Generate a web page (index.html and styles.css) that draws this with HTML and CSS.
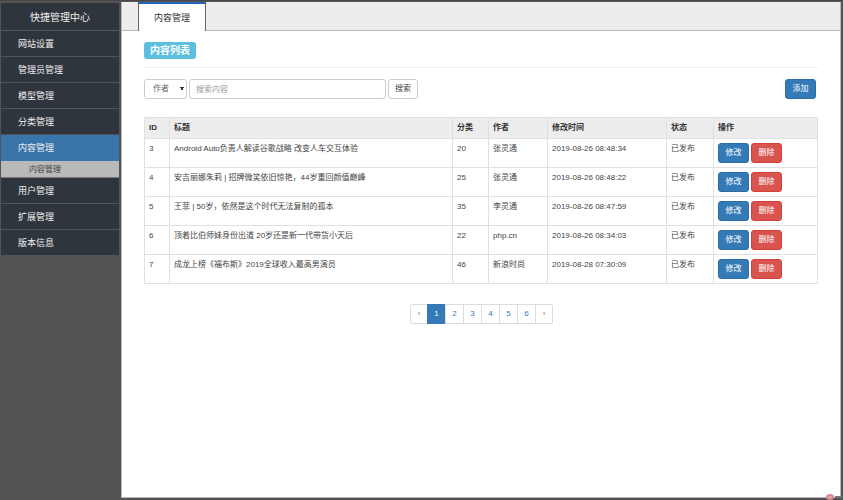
FILE: index.html
```html
<!DOCTYPE html>
<html lang="zh-CN">
<head>
<meta charset="utf-8">
<title>内容管理</title>
<link rel="stylesheet" href="styles.css">
</head>
<body>
<div class="app">
  <nav class="sidebar">
    <h1 class="brand">快捷管理中心</h1>
    <a class="item" href="#">网站设置</a>
    <a class="item" href="#">管理员管理</a>
    <a class="item" href="#">模型管理</a>
    <a class="item" href="#">分类管理</a>
    <a class="item active" href="#">内容管理</a>
    <a class="subitem" href="#">内容管理</a>
    <a class="item" href="#">用户管理</a>
    <a class="item" href="#">扩展管理</a>
    <a class="item" href="#">版本信息</a>
  </nav>
  <main class="main">
    <div class="tabs"><a class="tab" href="#">内容管理</a></div>
    <div class="content">
      <header class="heading"><h2 class="label">内容列表</h2></header>
      <form class="toolbar">
        <select class="control field" aria-label="搜索字段"><option>作者</option></select>
        <input class="control keyword" type="text" placeholder="搜索内容" aria-label="搜索内容">
        <button class="control search" type="button">搜索</button>
        <button class="btn primary add" type="button">添加</button>
      </form>
      <table class="list">
        <colgroup><col class="c-id"><col><col class="c-cat"><col class="c-author"><col class="c-time"><col class="c-state"><col class="c-ops"></colgroup>
        <thead>
          <tr><th>ID</th><th>标题</th><th>分类</th><th>作者</th><th>修改时间</th><th>状态</th><th>操作</th></tr>
        </thead>
        <tbody>
          <tr><td>3</td><td>Android Auto负责人解读谷歌战略 改变人车交互体验</td><td>20</td><td>张灵通</td><td>2019-08-26 08:48:34</td><td>已发布</td><td><div class="ops"><button class="btn primary" type="button">修改</button><button class="btn danger" type="button">删除</button></div></td></tr>
          <tr><td>4</td><td>安吉丽娜朱莉 | 招牌微笑依旧惊艳，44岁重回颜值巅峰</td><td>25</td><td>张灵通</td><td>2019-08-26 08:48:22</td><td>已发布</td><td><div class="ops"><button class="btn primary" type="button">修改</button><button class="btn danger" type="button">删除</button></div></td></tr>
          <tr><td>5</td><td>王菲 | 50岁，依然是这个时代无法复制的孤本</td><td>35</td><td>李灵通</td><td>2019-08-26 08:47:59</td><td>已发布</td><td><div class="ops"><button class="btn primary" type="button">修改</button><button class="btn danger" type="button">删除</button></div></td></tr>
          <tr><td>6</td><td>顶着比伯师妹身份出道 20岁还是新一代带货小天后</td><td>22</td><td>php.cn</td><td>2019-08-26 08:34:03</td><td>已发布</td><td><div class="ops"><button class="btn primary" type="button">修改</button><button class="btn danger" type="button">删除</button></div></td></tr>
          <tr><td>7</td><td>成龙上榜《福布斯》2019全球收入最高男演员</td><td>46</td><td>新浪时尚</td><td>2019-08-28 07:30:09</td><td>已发布</td><td><div class="ops"><button class="btn primary" type="button">修改</button><button class="btn danger" type="button">删除</button></div></td></tr>
        </tbody>
      </table>
      <nav class="pages" aria-label="分页">
        <a class="arrow" href="#">‹</a><a class="current" href="#">1</a><a href="#">2</a><a href="#">3</a><a href="#">4</a><a href="#">5</a><a href="#">6</a><a class="arrow" href="#">›</a>
      </nav>
    </div>
  </main>
  <svg class="mark" width="18" height="6" viewBox="0 0 18 6" aria-hidden="true">
    <ellipse cx="5" cy="3" rx="4" ry="3" fill="#d9898c"/>
    <path d="M3 3h4" stroke="#eec4c5"/>
    <path d="M10 3h7" stroke="#777" stroke-width="2"/>
  </svg>
</div>
</body>
</html>
```
FILE: styles.css
```css
* { box-sizing: border-box; }
body {
  margin: 0;
  background: #545454;
  color: #444;
  font: 8px/12px "Liberation Sans", "Noto Sans CJK SC", sans-serif;
}
a { text-decoration: none; }
button, input, select { font: inherit; margin: 0; }

.app {
  position: relative;
  display: flex;
  gap: 2px;
  min-height: 100vh;
  padding: 2px 2px 2px 1px;
  border-top: 1px solid #484848;
}
.sidebar {
  flex: 0 0 118px;
  display: flex;
  flex-direction: column;
}
.brand, .item {
  margin: 0;
  height: 26px;
  border-bottom: 1px solid #50555a;
  background: #2f353c;
  color: #eee;
  font-size: 9px;
  font-weight: 400;
  line-height: 27px;
}
.brand {
  height: 28px;
  font-size: 10px;
  line-height: 29px;
  text-align: center;
}
.item { padding-left: 17px; }
.item.active { background: #3974ab; border-color: #3974ab; }
.subitem {
  height: 17px;
  padding-left: 28px;
  background: #b9b9b9;
  border-bottom: 1px solid #777;
  color: #444;
  line-height: 17px;
}

.main {
  flex: 1;
  min-width: 0;
  margin-top: -1px;
  background: #fff;
  border: solid #b8b8b8;
  border-width: 0 1px 1px;
}
.tabs {
  display: flex;
  height: 29px;
  padding-left: 16px;
  background: #ededed;
  border-bottom: 1px solid #bbb;
}
.tab {
  height: 29px;
  padding: 0 15px;
  background: #fff;
  border: solid #666;
  border-width: 0 1px;
  border-top: 2px solid #2463ba;
  color: #333;
  font-size: 9px;
  line-height: 29px;
}
.content { padding: 11px 22px; }
.heading {
  padding-bottom: 8px;
  border-bottom: 1px solid #eee;
}
.label {
  width: max-content;
  margin: 0;
  padding: 0 6px;
  border-radius: 3px;
  background: #5bbfdd;
  color: #fff;
  font-size: 10px;
  line-height: 17px;
}
.toolbar {
  display: flex;
  gap: 2px;
  margin: 11px 0 18px;
}
.control, .btn {
  height: 20px;
  border: 1px solid #ccc;
  border-radius: 3px;
  background: #fff;
  color: #444;
}
.field {
  width: 43px;
  padding: 0 8px;
  appearance: none;
  background: #fff conic-gradient(from -30deg at 50% 100%, #333 60deg, transparent 0) no-repeat 35px 7px / 4px 4px;
  color: #666;
}
.keyword { flex: 0 1 197px; min-width: 0; padding: 0 6px; }
.keyword::placeholder { color: #999; opacity: 1; }
.search { padding: 0 6px; }
.btn {
  width: 31px;
  padding: 0;
  color: #fff;
}
.primary { background: #337ab7; border-color: #2e6da4; }
.danger { background: #d9534f; border-color: #d43f3a; }
.add { margin: 0 2px 0 auto; }

.list {
  width: 100%;
  table-layout: fixed;
  border-collapse: collapse;
}
.list th, .list td {
  padding: 4px;
  border: 1px solid #e0e0e0;
  text-align: left;
  vertical-align: top;
}
.list th { background: #ededed; color: #333; }
.c-id { width: 25px; }
.c-cat { width: 36px; }
.c-author { width: 59px; }
.c-time { width: 119px; }
.c-state { width: 47px; }
.c-ops { width: 104px; }
.ops { display: flex; gap: 2px; }

.pages {
  display: flex;
  justify-content: center;
  margin-top: 20px;
}
.pages a {
  width: 19px;
  height: 20px;
  margin-right: -1px;
  border: 1px solid #ddd;
  background: #fff;
  color: #337ab7;
  line-height: 18px;
  text-align: center;
}
.pages .arrow { width: 18px; color: #777; }
.pages a:first-child { border-radius: 2px 0 0 2px; }
.pages a:last-child { border-radius: 0 2px 2px 0; }
.pages .current { background: #337ab7; border-color: #337ab7; color: #fff; }

.mark { position: absolute; right: 0; bottom: 0; }
```
